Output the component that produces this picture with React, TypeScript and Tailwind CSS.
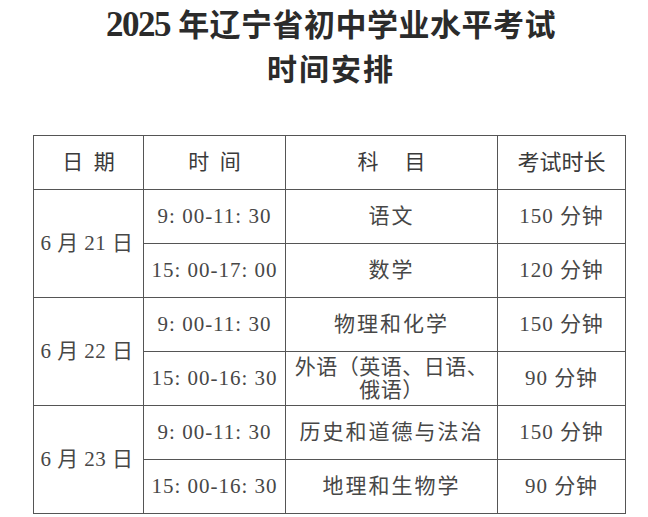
const serif = "font-['Liberation_Serif','Noto_Sans_CJK_SC',serif]"

type Row = { date?: string; time: string; subject: React.ReactNode; dur: string; tight?: boolean }

const rows: Row[] = [
  { date: "6 月 21 日", time: "9: 00-11: 30", subject: "语文", dur: "150 分钟" },
  { time: "15: 00-17: 00", subject: "数学", dur: "120 分钟" },
  { date: "6 月 22 日", time: "9: 00-11: 30", subject: "物理和化学", dur: "150 分钟" },
  {
    time: "15: 00-16: 30",
    subject: (
      <>
        外语（英语、日语、
        <br />
        俄语）
      </>
    ),
    dur: "90 分钟",
    tight: true,
  },
  { date: "6 月 23 日", time: "9: 00-11: 30", subject: "历史和道德与法治", dur: "150 分钟" },
  { time: "15: 00-16: 30", subject: "地理和生物学", dur: "90 分钟" },
]

export default function App() {
  return (
    <div className={`w-[648px] h-[517px] bg-white text-[#474747] ${serif}`}>
      <div className="pt-[3px] pl-[14px] text-center text-[#2b2b2b] font-semibold">
        <div className="leading-[44px] text-[31px] tracking-[0.5px]">
          <span className="text-[35px] font-bold tracking-[-1.5px]">2025</span> 年辽宁省初中学业水平考试
        </div>
        <div className="leading-[44px] text-[30px] tracking-[2px]">时间安排</div>
      </div>

      <table className="mt-[43px] ml-[33px] w-[592px] table-fixed text-center">
        <colgroup>
          <col className="w-[110px]" />
          <col className="w-[142px]" />
          <col className="w-[212px]" />
          <col className="w-[128px]" />
        </colgroup>
        <thead>
          <tr className="h-[54px] text-[21px] text-[#3a3a3a]">
            <th className="border border-[#555] font-normal">日&nbsp;&nbsp;期</th>
            <th className="border border-[#555] font-normal">时&nbsp;&nbsp;间</th>
            <th className="border border-[#555] font-normal">科&nbsp;&nbsp;&nbsp;&nbsp;&nbsp;目</th>
            <th className="border border-[#555] font-normal text-[22px]">考试时长</th>
          </tr>
        </thead>
        <tbody>
          {rows.map((r, i) => (
            <tr key={i} className="h-[54px] text-[21px]">
              {r.date && (
                <td rowSpan={2} className="border border-[#555] tracking-[0.5px] pr-[3px]">
                  {r.date}
                </td>
              )}
              <td className="border border-[#555] tracking-[1px]">{r.time}</td>
              <td
                className={
                  r.tight
                    ? "border border-[#555] leading-[23px] tracking-[0.5px]"
                    : "border border-[#555] tracking-[2px]"
                }
              >
                {r.subject}
              </td>
              <td className="border border-[#555] tracking-[1px]">{r.dur}</td>
            </tr>
          ))}
        </tbody>
      </table>
    </div>
  )
}
